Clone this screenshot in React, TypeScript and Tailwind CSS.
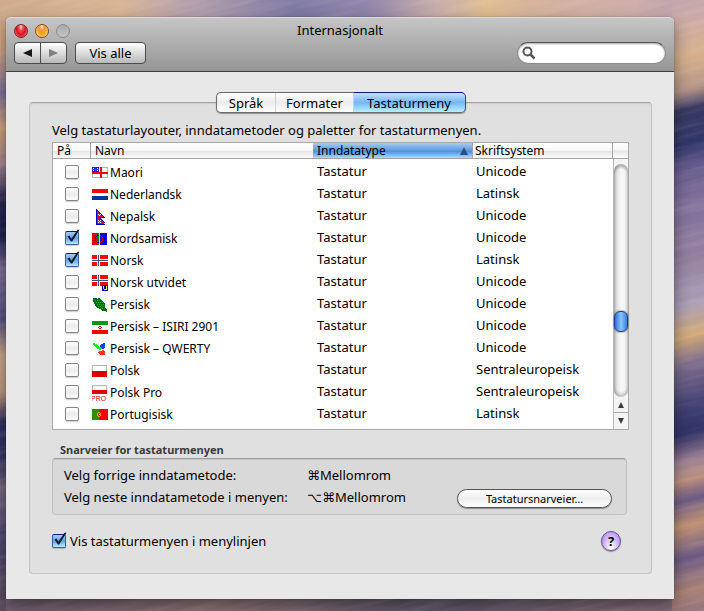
import React, { useState } from "react";

type Row = { name: string; flag: string; script: string; on?: boolean };

const ROWS: Row[] = [
  { name: "Maori", flag: "maori", script: "Unicode" },
  { name: "Nederlandsk", flag: "dutch", script: "Latinsk" },
  { name: "Nepalsk", flag: "nepal", script: "Unicode" },
  { name: "Nordsamisk", flag: "sami", script: "Unicode", on: true },
  { name: "Norsk", flag: "norway", script: "Latinsk", on: true },
  { name: "Norsk utvidet", flag: "norwayExt", script: "Unicode" },
  { name: "Persisk", flag: "persian", script: "Unicode" },
  { name: "Persisk – ISIRI 2901", flag: "iran", script: "Unicode" },
  { name: "Persisk – QWERTY", flag: "qwerty", script: "Unicode" },
  { name: "Polsk", flag: "poland", script: "Sentraleuropeisk" },
  { name: "Polsk Pro", flag: "polandPro", script: "Sentraleuropeisk" },
  { name: "Portugisisk", flag: "portugal", script: "Latinsk" },
];

function NorwayCross() {
  return (
    <>
      <path fill="#f00" d="M0 2h16v11H0z" />
      <path fill="#fff" d="M4 2h5v11H4zM0 6h16v3H0z" />
      <path fill="#f00" d="M0 2h5v4H0zM8 2h8v4H8zM0 9h5v4H0zM8 9h8v4H8z" />
      <path fill="#1d5f8a" d="M6 2h1v11H6zM0 7h16v1H0z" />
    </>
  );
}

const FLAGS: Record<string, React.ReactNode> = {
  maori: (
    <>
      <path fill="#b4b4b4" d="M0 2h16v11H0z" />
      <path fill="#fff" d="M1 3h14v9H1z" />
      <path fill="#1414c8" d="M0 2h7v5H0z" />
      <path fill="#fff" d="M1 3h1v1H1zM5 3h1v1H5zM1 5h1v1H1zM5 5h1v1H5z" />
      <path fill="#e00020" d="M3 2h1v5H3zM0 4h7v1H0z" />
      <path fill="#f00" d="M8 2h2v11H8zM0 7h16v2H0z" />
    </>
  ),
  dutch: (
    <>
      <path fill="#f00" d="M0 2h16v4H0z" />
      <path fill="#fff" d="M0 6h16v3H0z" />
      <path fill="#003399" d="M0 9h16v4H0z" />
    </>
  ),
  nepal: (
    <>
      <path fill="#0000c0" d="M4 0h1v16H4zM5 1h1v1H5zM6 2h1v1H6zM7 3h1v1H7zM8 4h1v1H8zM9 5h1v1H9zM10 6h1v1h-1zM11 7h1v1h-1zM7 8h6v1H7zM8 9h1v1H8zM9 10h1v1H9zM10 11h1v1h-1zM11 12h1v1h-1zM12 13h1v1h-1zM5 15h8v1H5z" />
      <path fill="#e0002a" d="M5 2h1v13H5zM6 3h1v12H6zM7 4h1v4H7zM8 5h1v3H8zM9 6h1v2H9zM10 7h1v1h-1zM7 9h1v6H7zM8 10h1v5H8zM9 11h1v4H9zM10 12h1v3h-1zM11 13h1v2h-1z" />
      <path fill="#fff" d="M6 5h1v1H6zM7 6h1v1H7zM8 5h1v1H8zM6 11h1v1H6zM8 11h1v1H8zM7 12h1v1H7zM6 13h1v1H6zM8 13h1v1H8z" />
    </>
  ),
  sami: (
    <>
      <path fill="#e00000" d="M0 2h5v12H0z" />
      <path fill="#0a8a1a" d="M5 2h2v12H5z" />
      <path fill="#ffe000" d="M7 2h1v12H7z" />
      <path fill="#0000d8" d="M8 2h7v12H8z" />
      <path fill="#d80000" d="M5 2h1v12H5z" />
      <path fill="#0000c0" d="M5 4h2v1H5zM4 5h1v1H4zM3 6h1v4H3zM4 10h1v1H4zM5 11h2v1H5z" />
      <path fill="#e00000" d="M8 4h1v1H8zM9 5h1v1H9zM10 6h1v4h-1zM9 10h1v1H9zM8 11h1v1H8z" />
    </>
  ),
  norway: <NorwayCross />,
  norwayExt: (
    <>
      <g transform="translate(0 -2)"><NorwayCross /></g>
      <path fill="#0000a0" d="M10 10h6v6h-6z" />
      <path fill="#ff0" d="M11 11h1v3h-1zM14 11h1v4h-3v-1h2z" />
    </>
  ),
  persian: (
    <>
      <path fill="#0a6b14" d="M1 1h3l1 1h1V1h2l1 2 2 1 2 3v3l2 3v2l-2-1h-3l-2-2-3-1-2-3-1-3H1z" />
      <path fill="none" stroke="#25b032" strokeDasharray="1 1" d="M3 3.500h5M4 5.500h7M5 7.500h7M6 9.500h6M8 11.500h4" />
    </>
  ),
  iran: (
    <>
      <path fill="#009a1a" d="M0 2h16v4H0z" />
      <path fill="#fff" d="M0 6h16v5H0z" />
      <path fill="#f00" d="M0 11h16v4H0z" />
      <path fill="#e00000" d="M7 7h2v1H7zM6 8h1v1H6zM9 8h1v1H9zM7 9h2v1H7z" />
    </>
  ),
  qwerty: (
    <>
      <path fill="#1cf01c" d="M1 2l4 1 2 3 3 1-1 2-4-1-3-3z" />
      <path fill="#1040f0" d="M9 3l3-1 1 1v4l-3 1-2-2z" />
      <path fill="#bff5b0" d="M3 8l4 2v2z" />
      <path fill="#f5391a" d="M6 11l5-2 2 1v4H8z" />
    </>
  ),
  poland: (
    <>
      <path fill="#b4b4b4" d="M0 2h15v7H0z" />
      <path fill="#fff" d="M1 3h13v5H1z" />
      <path fill="#d00" d="M0 8h15v6H0z" />
    </>
  ),
  polandPro: (
    <>
      <path fill="#b4b4b4" d="M0 0h15v5H0z" />
      <path fill="#fff" d="M1 1h13v4H1z" />
      <path fill="#d00" d="M0 5h15v4H0z" />
      <text x="-1" y="16" fill="#d00" fontSize="7" fontFamily="Liberation Sans, sans-serif">PRO</text>
    </>
  ),
  portugal: (
    <>
      <path fill="#2f8f00" d="M0 2h7v11H0z" />
      <path fill="#f00" d="M7 2h9v11H7z" />
      <path fill="#d8b000" d="M6 5h2v1H6zM5 6h1v3H5zM8 6h1v3H8zM6 9h2v1H6z" />
      <path fill="#f03010" d="M6 6h2v3H6z" />
      <path fill="#fff" d="M7 7h1v1H7z" />
    </>
  ),
};

function Tick({ label, defaultChecked, id }: { label?: string; defaultChecked?: boolean; id?: string }) {
  return (
    <span className="relative block size-[14px] shrink-0">
      <input
        id={id}
        type="checkbox"
        aria-label={label}
        defaultChecked={defaultChecked}
        className="peer block size-[14px] appearance-none rounded-[2px] border border-[#858585] bg-linear-to-b from-white via-[#ececec] to-[#fbfbfb] shadow-[0_1px_1px_rgba(0,0,0,0.2)] checked:border-[#3c5f9c] checked:border-t-[#14148c] checked:from-[#a9cdf3] checked:via-[#5fa4e6] checked:to-[#b6ecff]"
      />
      <svg viewBox="0 0 16 16" className="pointer-events-none absolute -top-[2px] left-0 hidden size-4 peer-checked:block" aria-hidden="true">
        <path d="M2.500 7.500l1.900-.9 2 3.200L12.500.8h2L7.200 12.500H6z" fill="#111a2c" />
      </svg>
    </span>
  );
}

function Wallpaper() {
  return (
    <svg className="absolute inset-0 size-full" viewBox="0 0 704 611" preserveAspectRatio="none" aria-hidden="true">
      <defs>
        <linearGradient id="wTop">
          <stop offset="0" stopColor="#cfa98a" /><stop offset=".17" stopColor="#d9b694" />
          <stop offset=".26" stopColor="#b7a1ac" /><stop offset=".42" stopColor="#7f7ba5" />
          <stop offset=".52" stopColor="#9085ab" /><stop offset=".62" stopColor="#c8adab" />
          <stop offset=".69" stopColor="#e0bd93" /><stop offset=".78" stopColor="#d3b09d" />
          <stop offset=".9" stopColor="#cfaeaa" /><stop offset="1" stopColor="#b29bb0" />
        </linearGradient>
        <linearGradient id="wLeft" x2="0" y2="1">
          <stop offset="0" stopColor="#cfa98a" /><stop offset=".08" stopColor="#cfa582" />
          <stop offset=".15" stopColor="#80709a" /><stop offset=".21" stopColor="#cfa47c" />
          <stop offset=".27" stopColor="#a08090" /><stop offset=".33" stopColor="#20204a" />
          <stop offset=".39" stopColor="#20234f" /><stop offset=".44" stopColor="#7a6e98" />
          <stop offset=".52" stopColor="#55507f" /><stop offset=".58" stopColor="#c9a68a" />
          <stop offset=".64" stopColor="#c09a80" /><stop offset=".69" stopColor="#2f2f60" />
          <stop offset=".75" stopColor="#383562" /><stop offset=".8" stopColor="#7b6a80" />
          <stop offset=".87" stopColor="#4a4570" /><stop offset="1" stopColor="#5b4a5c" />
        </linearGradient>
        <linearGradient id="wRight" x2="0" y2="1">
          <stop offset="0" stopColor="#b9a0b0" /><stop offset=".06" stopColor="#cbaaa8" />
          <stop offset=".12" stopColor="#d6b08c" /><stop offset=".17" stopColor="#b59486" />
          <stop offset=".2" stopColor="#3a3a62" /><stop offset=".25" stopColor="#2c3468" />
          <stop offset=".29" stopColor="#665b8c" /><stop offset=".35" stopColor="#80709c" />
          <stop offset=".43" stopColor="#92809e" /><stop offset=".5" stopColor="#a79cb5" />
          <stop offset=".55" stopColor="#d2a877" /><stop offset=".59" stopColor="#80708e" />
          <stop offset=".65" stopColor="#454274" /><stop offset=".7" stopColor="#2f3266" />
          <stop offset=".74" stopColor="#9c7f92" /><stop offset=".77" stopColor="#b98e7c" />
          <stop offset=".8" stopColor="#6c5a84" /><stop offset=".84" stopColor="#c09272" />
          <stop offset=".89" stopColor="#6c5a84" /><stop offset=".94" stopColor="#a87f74" />
          <stop offset="1" stopColor="#80677c" />
        </linearGradient>
        <linearGradient id="wBottom">
          <stop offset="0" stopColor="#6b5a6c" /><stop offset=".3" stopColor="#8a7072" />
          <stop offset=".6" stopColor="#5b5368" /><stop offset=".88" stopColor="#7b6570" />
          <stop offset="1" stopColor="#80677c" />
        </linearGradient>
        <filter id="streaks" x="0" y="0" width="1" height="1">
          <feTurbulence type="fractalNoise" baseFrequency=".012 .16" numOctaves="3" seed="4" />
          <feColorMatrix values="0 0 0 0 1  0 0 0 0 .88  0 0 0 0 .8  1.600 0 0 0 -.6" />
        </filter>
      </defs>
      <rect width="704" height="611" fill="url(#wLeft)" />
      <rect width="704" height="20" fill="url(#wTop)" />
      <rect x="6" y="596" width="698" height="15" fill="url(#wBottom)" />
      <rect x="672" width="32" height="650" y="-20" transform="skewY(-14) translate(0 170)" fill="url(#wRight)" />
      <g transform="rotate(-14 352 305)">
        <rect x="-100" y="-120" width="900" height="850" filter="url(#streaks)" opacity=".14" />
      </g>
    </svg>
  );
}

const TH = "h-4 border-b border-[#a3a3a3] p-0 text-left font-normal";
const TABS = ["Språk", "Formater", "Tastaturmeny"];

export default function App() {
  const [tab, setTab] = useState("Tastaturmeny");
  return (
    <div className="relative min-h-screen overflow-hidden pt-[17px] pr-[30px] pb-[13px] pl-[6px] font-['Noto_Sans','DejaVu_Sans',sans-serif] text-[13px] leading-4 text-black">
      <Wallpaper />
      <main className="relative rounded-t-[5px] bg-[#e8e8e8] shadow-[0_0_1px_rgba(0,0,0,0.7),0_6px_16px_rgba(0,0,0,0.45)]">
        <header className="rounded-t-[5px] border-t border-b border-t-[#dcdcdc] border-b-[#404040] bg-linear-to-b from-[#c5c5c5] to-[#969696] px-2 pb-[7px]">
          <div className="grid grid-cols-[1fr_auto_1fr] items-center pt-1">
            <div className="flex gap-[7px]">
              <button aria-label="Lukk" className="size-[14px] rounded-full border border-[#7c2322] bg-[radial-gradient(ellipse_at_50%_15%,#ffe5e5_0%,#f0504e_25%,#d81420_55%,#ff9c9c_100%)]" />
              <button aria-label="Minimer" className="size-[14px] rounded-full border border-[#8c4a1c] bg-[radial-gradient(ellipse_at_50%_15%,#fff0dc_0%,#ee9a3c_25%,#f0a030_50%,#ffe870_90%)]" />
              <button aria-label="Zoom" disabled className="size-[14px] rounded-full border border-[#8a8a8a] bg-linear-to-b from-[#a8a8a8] to-[#c4c4c4]" />
            </div>
            <h1 className="h-[17px]">Internasjonalt</h1>
          </div>
          <div className="mt-[3px] flex h-[22px] gap-2">
            <div className="flex w-[53px] overflow-hidden rounded-[4px] border border-[#4c4c4c] bg-linear-to-b from-white to-[#b9b9b9]">
              <button aria-label="Tilbake" className="flex flex-1 items-center justify-center border-r border-[#4c4c4c]">
                <svg viewBox="0 0 10 8" className="h-2 w-[10px]"><path d="M9 0v8L0 4z" fill="#1a1a1a" /></svg>
              </button>
              <button aria-label="Frem" className="flex flex-1 items-center justify-center">
                <svg viewBox="0 0 10 8" className="h-2 w-[10px]"><path d="M0 0v8l9-4z" fill="#808080" /></svg>
              </button>
            </div>
            <button className="w-[71px] rounded-[4px] border border-[#4c4c4c] bg-linear-to-b from-white to-[#b9b9b9]">Vis alle</button>
            <label className="ml-auto flex w-[149px] items-center rounded-full border border-[#8d8d8d] border-t-[#555] bg-white pl-1 shadow-[inset_0_1px_2px_rgba(0,0,0,0.35)]">
              <svg viewBox="0 0 14 14" className="size-[14px] shrink-0" fill="none" stroke="#555" aria-hidden="true">
                <circle cx="5.500" cy="5.500" r="4" strokeWidth="2" />
                <path d="M8.500 8.500l4 4" strokeWidth="2.500" />
              </svg>
              <input type="search" aria-label="Søk" className="w-full min-w-0 bg-transparent px-1 outline-none" />
            </label>
          </div>
        </header>

        <div className="pt-[30px] pr-[22px] pb-[25px] pl-[23px]">
          <section className="rounded-[4px] border border-[#c4c4c4] border-t-[#a2a2a2] bg-[#e0e0e0] px-[22px] pb-[22px] shadow-[inset_0_1px_1px_rgba(0,0,0,0.08)]">
            <div role="tablist" className="mx-auto -mt-[11px] flex h-[21px] w-[250px] rounded-[5px] shadow-[0_1px_1px_rgba(0,0,0,0.35)]">
              {TABS.map((t) => (
                <button
                  key={t}
                  role="tab"
                  aria-selected={t === tab}
                  onClick={() => setTab(t)}
                  className={
                    "border-t border-b border-[#6b6b6b] first:w-[60px] first:rounded-l-[5px] first:border-l last:w-[112px] last:rounded-r-[5px] last:border-r w-[78px] " +
                    (t === tab
                      ? "border-t-[#14148c] border-r-[#2a3fa8] bg-linear-to-b from-[#c4e0fb] via-[#74b6f8] to-[#b8f0ff]"
                      : "bg-linear-to-b from-white via-[#ececec] to-white shadow-[inset_-1px_0_0_#d0d0d0]")
                  }
                >
                  {t}
                </button>
              ))}
            </div>

            <p className="mt-[9px]">Velg tastaturlayouter, inndatametoder og paletter for tastaturmenyen.</p>

            <div className="mt-1 flex border border-[#a9a9a9] bg-white">
              <table className="mb-[6px] w-full min-w-0 flex-1 table-fixed border-separate border-spacing-0">
                <colgroup>
                  <col className="w-[38px]" />
                  <col />
                  <col className="w-[160px]" />
                  <col className="w-[140px]" />
                </colgroup>
                <thead className="bg-[linear-gradient(#fff_0%,#f6f6f6_48%,#e6e6e6_52%,#fff_100%)] text-[12px] leading-[14px]">
                  <tr>
                    <th className={TH + " border-r pl-1"}>På</th>
                    <th className={TH + " pl-1"}>Navn</th>
                    <th aria-sort="ascending" className={TH + " border-r border-[#6f92d0] bg-[linear-gradient(#a9cbee_0%,#5b9ce0_50%,#4e93dc_55%,#a5dcff_100%)] pr-1 pl-1"}>
                      <span className="flex items-center justify-between">
                        Inndatatype
                        <svg viewBox="0 0 8 8" className="size-2" aria-hidden="true"><path d="M4 0l4 8H0z" fill="#2f4f78" /></svg>
                      </span>
                    </th>
                    <th className={TH + " border-r pl-[2px]"}>Skriftsystem</th>
                  </tr>
                </thead>
                <tbody>
                  {ROWS.map((r) => (
                    <tr key={r.name} className="h-[22px]">
                      <td className="p-0 pt-1 pl-3"><Tick label={r.name} defaultChecked={r.on} /></td>
                      <td className="p-0 pt-[5px] pl-[1px]">
                        <span className="flex items-center gap-[2px] text-[12px]">
                          <svg viewBox="0 0 16 16" className="size-4 shrink-0" shapeRendering="crispEdges" aria-hidden="true">{FLAGS[r.flag]}</svg>
                          {r.name}
                        </span>
                      </td>
                      <td className="p-0 pt-[2px] pl-1">Tastatur</td>
                      <td className="p-0 pt-[2px] pl-[3px]">{r.script}</td>
                    </tr>
                  ))}
                </tbody>
              </table>
              <div className="flex w-[15px] flex-col" aria-hidden="true">
                <div className="h-4 border-b border-[#a3a3a3] bg-[linear-gradient(#fff_0%,#f6f6f6_48%,#e6e6e6_52%,#fff_100%)]" />
                <div className="flex flex-1 flex-col border-l border-[#b8b8b8] bg-[#f4f4f4] pt-[5px]">
                  <div className="flex-1 rounded-full bg-linear-to-r from-[#cfcfcf] via-[#fafafa] to-[#ededed] pt-[147px] shadow-[inset_0_3px_3px_rgba(0,0,0,0.3),inset_0_-3px_3px_rgba(0,0,0,0.2)]">
                    <div className="h-[21px] rounded-[6px] border border-[#1c3f96] bg-linear-to-r from-[#2c6ede] via-[#8cc4fa] to-[#2f80e4] shadow-[0_0_2px_rgba(0,0,0,0.7)]" />
                  </div>
                  <div className="flex h-4 items-center justify-center border-b border-[#a8a8a8]">
                    <svg viewBox="0 0 6 6" className="size-[6px]"><path d="M3 0l3 6H0z" fill="#3c3c3c" /></svg>
                  </div>
                  <div className="flex h-4 items-center justify-center">
                    <svg viewBox="0 0 6 6" className="size-[6px]"><path d="M3 6l3-6H0z" fill="#3c3c3c" /></svg>
                  </div>
                </div>
              </div>
            </div>

            <h2 className="mt-3 pl-2 text-[11px] font-bold text-[#3a3a3a]">Snarveier for tastaturmenyen</h2>
            <div className="mr-[2px] flex items-end justify-between rounded-[4px] border border-[#c2c2c2] border-t-[#9f9f9f] bg-[#d9d9d9] pt-[5px] pr-[14px] pb-[6px] pl-[11px] shadow-[inset_0_1px_1px_rgba(0,0,0,0.1)]">
              <dl className="grid grid-cols-[243px_auto] leading-[22px]">
                <dt>Velg forrige inndatametode:</dt>
                <dd>⌘Mellomrom</dd>
                <dt>Velg neste inndatametode i menyen:</dt>
                <dd>⌥⌘Mellomrom</dd>
              </dl>
              <button className="h-[19px] w-[155px] rounded-full border border-[#555] bg-linear-to-b from-white via-[#eee] to-white text-[11px] shadow-[0_1px_1px_rgba(0,0,0,0.35)]">
                Tastatursnarveier…
              </button>
            </div>

            <div className="mt-4 mr-2 flex items-center justify-between">
              <div className="flex items-center gap-1">
                <Tick id="menubar" defaultChecked />
                <label htmlFor="menubar">Vis tastaturmenyen i menylinjen</label>
              </div>
              <button aria-label="Hjelp" className="size-5 rounded-full border border-[#6a5590] bg-[radial-gradient(ellipse_at_50%_90%,#fff_0%,#dcc6ff_45%,#b290ea_80%)] font-bold shadow-[0_1px_1px_rgba(0,0,0,0.4)]">
                ?
              </button>
            </div>
          </section>
        </div>
      </main>
    </div>
  );
}
